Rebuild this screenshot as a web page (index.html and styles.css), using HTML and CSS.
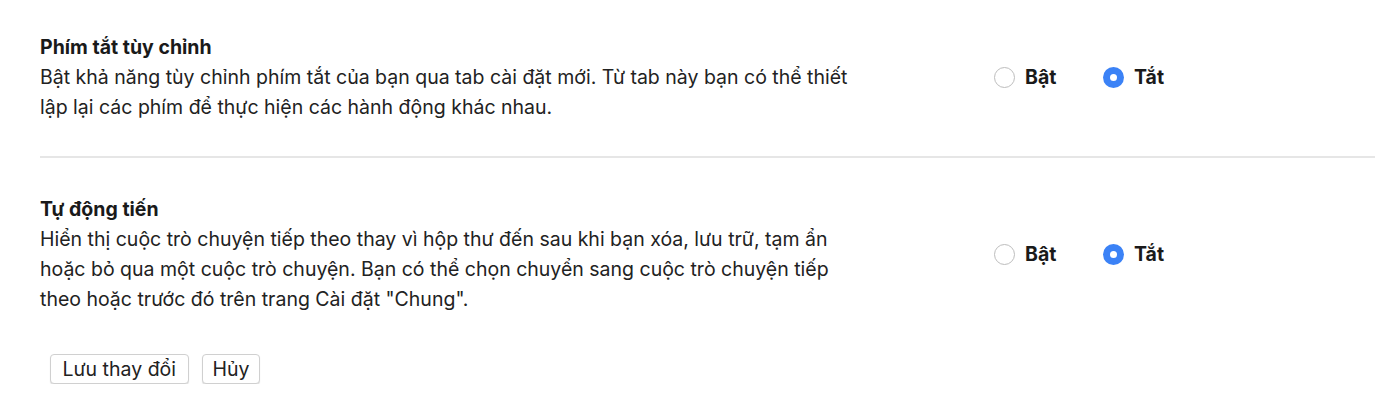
FILE: index.html
```html
<!DOCTYPE html>
<html lang="vi">
<head>
<meta charset="utf-8">
<link rel="stylesheet" href="styles.css">
</head>
<body>
<div class="page">
  <section class="setting">
    <div class="info">
      <div class="title">Phím tắt tùy chỉnh</div>
      <div class="desc">Bật khả năng tùy chỉnh phím tắt của bạn qua tab cài đặt mới. Từ tab này bạn có thể thiết lập lại các phím để thực hiện các hành động khác nhau.</div>
    </div>
    <div class="options">
      <label class="opt"><span class="radio"></span><span class="lbl">Bật</span></label>
      <label class="opt"><span class="radio checked"></span><span class="lbl">Tắt</span></label>
    </div>
  </section>
  <div class="divider"></div>
  <section class="setting">
    <div class="info">
      <div class="title">Tự động tiến</div>
      <div class="desc">Hiển thị cuộc trò chuyện tiếp theo thay vì hộp thư đến sau khi bạn xóa, lưu trữ, tạm ẩn hoặc bỏ qua một cuộc trò chuyện. Bạn có thể chọn chuyển sang cuộc trò chuyện tiếp theo hoặc trước đó trên trang Cài đặt "Chung".</div>
    </div>
    <div class="options">
      <label class="opt"><span class="radio"></span><span class="lbl">Bật</span></label>
      <label class="opt"><span class="radio checked"></span><span class="lbl">Tắt</span></label>
    </div>
  </section>
  <div class="actions">
    <button class="btn btn-save">Lưu thay đổi</button>
    <button class="btn">Hủy</button>
  </div>
</div>
</body>
</html>
```
FILE: styles.css
```css
html, body {
  margin: 0;
  padding: 0;
  background: #ffffff;
}
body {
  font-family: Inter, Roboto, "Noto Sans", sans-serif;
  color: #222222;
}
.page {
  padding: 32px 3px 0 40px;
}
.setting {
  display: flex;
  align-items: center;
}
.info {
  width: 954px;
}
.title {
  font-weight: 700;
  font-size: 19.5px;
  line-height: 30px;
  color: #1a1a1a;
}
.desc {
  font-size: 19.5px;
  line-height: 30px;
  color: #222222;
  max-width: 815px;
}
.divider {
  height: 2px;
  background: #e6e6e6;
  margin: 34px 0 36px 0;
}
.options {
  display: flex;
  align-items: center;
}
.opt {
  display: flex;
  align-items: center;
  width: 109px;
}
.radio {
  box-sizing: border-box;
  width: 21px;
  height: 21px;
  border-radius: 50%;
  border: 1.5px solid #bdbdbd;
  background: #fff;
  margin-right: 10px;
  position: relative;
}
.radio.checked {
  border: none;
  background: #3b82f6;
}
.radio.checked::after {
  content: "";
  position: absolute;
  left: 7px;
  top: 7px;
  width: 7px;
  height: 7px;
  border-radius: 50%;
  background: #fff;
}
.lbl {
  font-weight: 700;
  font-size: 19.5px;
  color: #1a1a1a;
}
.actions {
  display: flex;
  gap: 13px;
  margin: 40px 0 0 10px;
}
.btn {
  font-family: Inter, Roboto, "Noto Sans", sans-serif;
  font-size: 19.5px;
  color: #222;
  background: #fff;
  border: 1px solid #d0d0d0;
  border-radius: 4px;
  height: 30px;
  padding: 0 10px;
  box-shadow: 0 1px 1px rgba(0,0,0,0.12);
}
.btn-save {
  padding: 0 11.5px;
}
```
